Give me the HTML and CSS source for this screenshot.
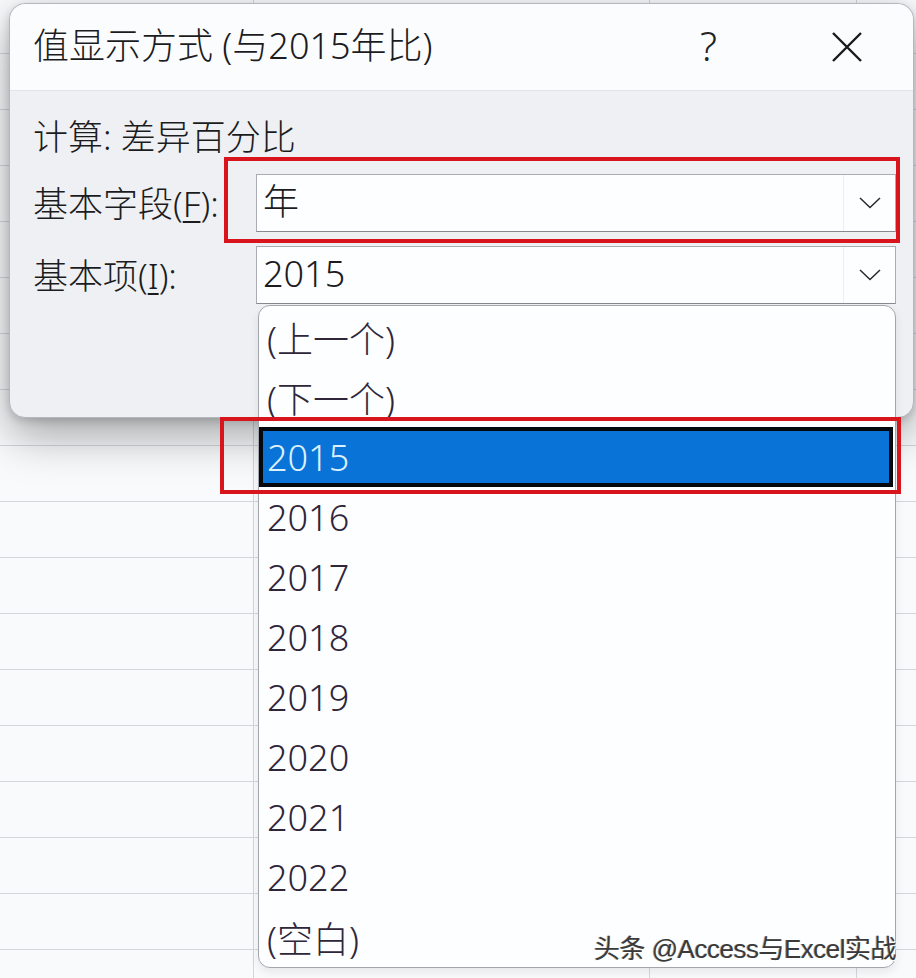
FILE: index.html
```html
<!DOCTYPE html>
<html lang="zh-CN">
<head>
    <meta charset="UTF-8">
    <meta name="viewport" content="width=device-width, initial-scale=1.0">
    <title>值显示方式</title>
    <link rel="stylesheet" href="styles.css">
</head>
<body>
    <div class="sheet"></div>

    <div class="dialog">
        <header class="title-bar">
            <span class="title">值显示方式 (与2015年比)</span>
            <div class="title-actions">
                <button class="help-btn">?</button>
                <button class="close-btn">
                    <svg width="32" height="32" viewBox="0 0 32 32"><path d="M2 2 L30 30 M30 2 L2 30" stroke="#1a1a1a" stroke-width="2.4" fill="none"/></svg>
                </button>
            </div>
        </header>
        <div class="dialog-body">
            <div class="calc-line">计算: 差异百分比</div>
            <div class="field-row">
                <label>基本字段(<u>F</u>):</label>
                <div class="combo">
                    <span class="combo-value">年</span>
                    <span class="combo-arrow">
                        <svg width="22" height="12" viewBox="0 0 22 12"><path d="M1 1 L11 10.5 L21 1" stroke="#2a2a2a" stroke-width="1.5" fill="none"/></svg>
                    </span>
                </div>
            </div>
            <div class="field-row">
                <label>基本项(<u>I</u>):</label>
                <div class="combo">
                    <span class="combo-value">2015</span>
                    <span class="combo-arrow">
                        <svg width="22" height="12" viewBox="0 0 22 12"><path d="M1 1 L11 10.5 L21 1" stroke="#2a2a2a" stroke-width="1.5" fill="none"/></svg>
                    </span>
                    <ul class="dropdown">
                        <li>(上一个)</li>
                        <li>(下一个)</li>
                        <li class="selected">2015</li>
                        <li>2016</li>
                        <li>2017</li>
                        <li>2018</li>
                        <li>2019</li>
                        <li>2020</li>
                        <li>2021</li>
                        <li>2022</li>
                        <li>(空白)</li>
                    </ul>
                </div>
            </div>
        </div>
    </div>

    <!-- red annotation boxes -->
    <div class="mark mark-field"></div>
    <div class="mark mark-item"></div>

    <div class="watermark">头条 @Access与Excel实战</div>
</body>
</html>
```

FILE: styles.css
```css
:root {
    --grid-line: #d3d7dc; --cell-bg: #f8fafc; --title-bg: #fbfcfe;
    --body-bg: #eef0f3; --text: #1c1c1e; --item-text: #2f2639;
    --select-bg: #0a73d7; --mark: #d8141d;
}
html, body { margin: 0; padding: 0; }
body {
    width: 916px; height: 978px; overflow: hidden; position: relative;
    font-family: "Noto Sans", "Noto Sans CJK SC", sans-serif; font-weight: 300;
    color: var(--text); background-color: var(--cell-bg);
}
.sheet {
    position: absolute; inset: 0;
    background-image:
        linear-gradient(to right, transparent 253px, var(--grid-line) 253px 254px, transparent 254px 649px,
            var(--grid-line) 649px 650px, transparent 650px 856px, var(--grid-line) 856px 857px, transparent 857px),
        linear-gradient(to bottom, transparent 55px, var(--grid-line) 55px 56px);
    background-size: 100% 100%, 100% 56px;
    background-position: 0 0, 0 54px;
}

.dialog {
    position: absolute; left: 9px; top: 3px; width: 903px; height: 413px;
    border: 1px solid #b4b8be; border-radius: 16px; background: var(--body-bg);
    box-shadow: 0 18px 45px rgba(0,0,0,0.34), 0 3px 8px rgba(0,0,0,0.16);
    display: flex; flex-direction: column;
}
.title-bar {
    height: 86px; flex-shrink: 0; display: flex; align-items: center; justify-content: space-between;
    padding: 0 50px 0 23px; background: var(--title-bg); border-bottom: 1px solid #e2e4e8;
    border-radius: 16px 16px 0 0;
}
.title { font-size: 36px; line-height: 1; padding-bottom: 2px; }
.title-actions { display: flex; align-items: center; gap: 114px; }
.help-btn, .close-btn {
    border: none; background: none; padding: 0; margin: 0; cursor: pointer;
    font-family: inherit; color: #222; display: flex; align-items: center;
}
.help-btn { font-size: 40px; line-height: 1; font-weight: 300; padding-bottom: 2px; }
.close-btn svg { display: block; }

.dialog-body {
    flex: 1; padding: 23px 16px 0 23px; display: flex; flex-direction: column; gap: 14px;
    border-radius: 0 0 16px 16px;
}
.calc-line { font-size: 35px; line-height: 46px; height: 46px; }
.field-row { display: grid; grid-template-columns: 223px 640px; align-items: center; }
.field-row:first-of-type { margin-top: 1px; }
.field-row label { font-size: 35px; line-height: 1; white-space: nowrap; }
.field-row u { text-underline-offset: 4px; text-decoration-thickness: 2px; }

.combo {
    position: relative; height: 56px; display: flex; align-items: center;
    background: #fdfeff; border: 1px solid #a9adb3; border-bottom-color: #868a90;
}
.combo-value { flex: 1; padding-left: 6px; font-size: 36px; line-height: 1; padding-bottom: 2px; }
.combo-arrow {
    width: 52px; height: 100%; display: flex; align-items: center; justify-content: center;
    border-left: 1px solid #eceef1; box-sizing: border-box;
}

.dropdown {
    position: absolute; top: calc(100% + 2px); left: 1px; right: -1px;
    margin: 0; padding: 1px 0 0; list-style: none;
    background: #fdfeff; border: 1px solid #a3a7ad; border-radius: 12px;
    box-shadow: 0 4px 10px rgba(0,0,0,0.08);
}
.dropdown li {
    height: 60px; box-sizing: border-box; display: flex; align-items: center;
    padding-left: 8px; font-size: 36px; color: var(--item-text);
}
.dropdown li.selected {
    background: var(--select-bg); color: #dcf1ff; border: 4px solid #05080c;
    margin-right: 2px; padding-left: 4px;
}

.mark { position: absolute; border: 4px solid var(--mark); box-sizing: border-box; pointer-events: none; }
.mark-field { left: 224px; top: 157px; width: 676px; height: 86px; }
.mark-item { left: 220px; top: 417px; width: 681px; height: 77px; }

.watermark {
    position: absolute; right: 20px; top: 928px;
    font-family: "Liberation Sans", "Noto Sans CJK SC", sans-serif; font-size: 26px; font-weight: 400;
    color: #3a3a3a; text-shadow: 1px 1px 0 #fff, -1px 0 0 rgba(0,0,0,0.35);
    letter-spacing: -0.5px;
}
```
